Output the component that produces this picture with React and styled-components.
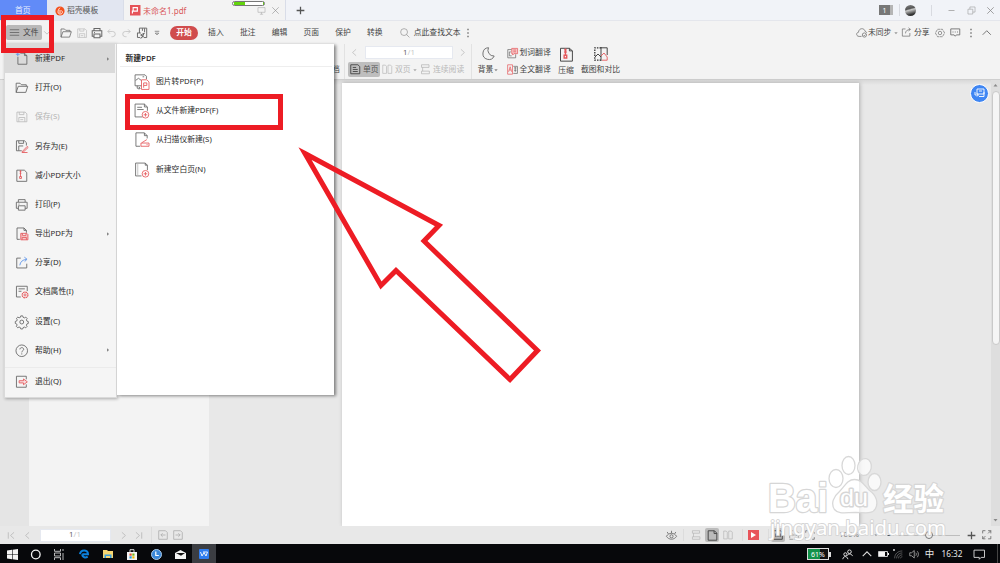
import React from "react";
import styled, { createGlobalStyle } from "styled-components";

const Global = createGlobalStyle`
  html, body { margin: 0; padding: 0; overflow: hidden; background: #e8e8e8; }
  * { box-sizing: border-box; }
`;

const Screen = styled.div`
  position: relative;
  width: 1000px;
  height: 563px;
  overflow: hidden;
  display: flex;
  flex-direction: column;
  font-family: "Noto Sans", "Noto Sans CJK SC", sans-serif;
  font-size: 7.8px;
  line-height: 1;
  color: #444;
  white-space: nowrap;
  background: #e8e8e8;
`;

const Svg = styled.svg`
  display: block;
  flex: none;
  overflow: visible;
  fill: none;
  stroke: ${(p) => p.$c || "#666"};
  stroke-width: ${(p) => p.$sw || 0.9};
`;

const R = "#e5595c";
const B = "#5b93e8";

/* Every glyph is drawn on a 14 x 14 grid. */
const glyphs = {
  folder: <path d="M1.2 11.8V2.3h4l1.5 1.6h5v1.6M1.2 11.8 3.4 5.5h9.8l-2 6.3z" />,
  save: <path d="M2 2.2h8.5L12.3 4v8.2H2zM4.4 2.2v2.6h4.8V2.2M4 12.2V7.8h6.2v4.4M5.5 10h3" />,
  saveAs: <><path d="M7 12.2H1.5V1.8h8.3l2 2v3M3.9 1.8v2.7h5V1.8M3.9 12V7.2h4.6" /><path stroke={R} d="m7.8 12.7 4.8-5 1.1 1-4.7 4.5-1.5.2zM7 14h6" /></>,
  shrink: <><path d="M1.9 1.2h7.8l2.5 2.4v9.2H1.9z" /><path stroke={R} d="M5.7 1.3v7M4.8 7.8h1.9v2H4.8zM4.8 2.5h1.8M4.8 4.4h1.8" /></>,
  compress: <><path stroke="#444" d="M1.4 1.2h8.3l2.800 2.400v9.600H1.400zM9.700 1.200v2.400h2.800" /><path stroke={R} strokeWidth="1.300" d="M6 1.300v7M4.800 7.600h2.400v2.600H4.800zM4.800 2.700h2.400M4.800 4.700h2.400" /></>,
  print: <path d="M3.5 4.2V1.7h7v2.5M3.5 10.7H1.4V4.4h11.2v6.3h-2.1M3.5 8.1h7v4.5h-7zM3.6 6.3h1" />,
  exportAs: <><path d="M5 12.8H2.1V1h7.2l2.5 2.5V6M9.3 1v2.5h2.5" /><path stroke={R} fill="#f6c9ca" d="M6 6.6h6.2l1.2 1.2v5.500H6zM7.700 6.600v2.100h3.700V6.600M7.400 13.300v-2.500h4.400v2.500" /></>,
  shareBlue: <><path d="M6 2.2H1.8v10.2h10.4V8" /><path stroke={B} d="M5 9.700c.5-3.700 2.700-5.800 7-6.200M9.700 1.200l2.800 2.200-2.500 2.400" /></>,
  share: <path d="M6 2.6H1.8v9.6h10V8M6 8.5c0-3 2-5 6.5-5.3M10 1l2.5 2.2L10 5.3" />,
  props: <><path d="M6 12.4H1.5V1.3h11.2v5M3.7 4h6.5M3.7 6.5h3" /><circle cx="10.4" cy="10.3" r="3" stroke={R} strokeDasharray="1.8 .55" strokeWidth="1.2" /><circle cx="10.4" cy="10.3" r="1.1" stroke={R} /></>,
  gear: <><path d="M6 .9h2l.4 1.5 1.4.6 1.4-.8 1.4 1.4-.8 1.4.6 1.4 1.400.4v2l-1.400.4-.6 1.400.7 1.300-1.400 1.400-1.400-.8-1.300.6-.4 1.400H6l-.5-1.500-1.300-.6-1.400.8-1.400-1.400.8-1.400L1.600 9.200.3 8.700v-2L1.700 6.300l.6-1.400-.8-1.400L2.900 2.200l1.400.7 1.300-.5z" /><circle cx="7" cy="7.300" r="2" /></>,
  gearHex: <><path d="M3.600 1.800h6.800l3.100 5.200-3.100 5.200H3.600L.5 7z" strokeDasharray="4 .7" /><circle cx="7" cy="7" r="2.400" /></>,
  help: <><circle cx="7" cy="7" r="6" /><path d="M5.100 5.600c0-2.500 3.900-2.400 3.900 0 0 1.400-2 1.300-2 3.100M7 9.700v1.200" /></>,
  exit: <><path d="M11.700 4.500V1.300H1.500v11.400h10.200V9.700" /><path stroke={R} fill="#f8dcdd" d="M4.300 5.900h4.500V4.100l4 3-4 3V8.200H4.300z" /></>,
  newDoc: <><path d="M5.500 1.200h4.300l2.500 2.500v9H3V5M9.800 1.200v2.500h2.500" /><path stroke={B} d="M2.900.3v4M.9 2.300h4" /></>,
  picPdf: <><path d="M7 11H1V.8h9.300l1.300 1.300v2.600M1.500 6l2.700-2 2.600 2M8 2.600h1.500" /><path d="M3 11v2.300h2.600M4.600 12l1.200 1.300L4.600 14.500" /><path stroke={R} d="M7 5.400h5l2 2v7H7zM9 12.800V8.300h3v2.400H9.200" /></>,
  filePdf: <><path d="M8 13H1V1h8.700L12.500 3.700v3.600M9.700 1v2.700h2.800M3 4h4.500M3 6.100h6" /><circle cx="10.700" cy="11" r="3.100" stroke={R} /><path stroke={R} d="M9 11h3.400M10.700 9.300v3.400" /></>,
  scan: <><path d="M5.800 13.300H1.800V.8h7.900l2.600 2.600V6M9.700.8v2.600h2.600" /><path stroke={R} d="M7.300 10 12 7.100M6.500 10.300h7.500v3H6.500zM11.700 11.800h1" /></>,
  blank: <><path d="M7 13H1.500V1h9l2 2v4.500M10.500 1v2h2" /><path stroke="#bbb" d="M3.500 1.500v11" /><circle cx="10.700" cy="11" r="3.100" stroke={R} /><path stroke={R} d="M9 11h3.400M10.700 9.300v3.400" /></>,
  undo: <path d="M5 3 2.300 5.700 5 8.400M2.300 5.700H8.500a3.300 3.300 0 0 1 0 6.600H7" />,
  redo: <path d="m9 3 2.700 2.700L9 8.400M11.700 5.700H5.500a3.300 3.300 0 0 0 0 6.600H7" />,
  preview: <path d="M4 7V1.300h8.500v11H9M1.700 6.700v5.500h3M1.700 7h4M7.500 1.500v3M10 1.500V6M6.500 13l3.200-6M9.700 7.200 5.400 9.400l3.800 1.700M5.500 13.500l1-2" />,
  hamburger: <path d="M1 3.500h12M1 7h12M1 10.500h12" />,
  down: <path d="m2 4 5 5 5-5" />,
  up: <path d="m1 10 6-6 6 6" />,
  dropdown: <path d="M3 4h8M4 7.200h6L7 10.300z" />,
  left: <path d="M9.500 2 4 7l5.500 5" />,
  right: <path d="m4.500 2 5.500 5-5.500 5" />,
  first: <path d="M2 2v10M11 2 5.500 7l5.500 5" />,
  last: <path d="M12 2v10M3 2l5.500 5L3 12" />,
  caret: <path d="M1 4h12L7 11z" fill="currentColor" stroke="none" />,
  caretR: <path d="m4 1 6.500 6L4 13z" fill="currentColor" stroke="none" />,
  search: <><circle cx="5.700" cy="5.700" r="4.800" /><path d="m9.200 9.200 4 4" /></>,
  dots: <path d="M7 1.200v1.800M7 6.100v1.800M7 11v1.800" strokeWidth="1.800" />,
  cloud: <><path d="M7 12H4C0 12-.2 7 3.200 6.700 3.600.7 11 1 11.500 5.500c1.300.3 2 1 2 2" /><circle cx="10.700" cy="10.200" r="2.700" /><path d="m9.500 10.200 1 1 1.500-1.500" /></>,
  comment: <path d="M1 2.500h12v8H8.500L7 12.300l-1.500-1.800H1zM4 6v1.300M7 6v1.300M10 6v1.300" />,
  monitor: <path d="M1.500 2.500h11v7.300h-11zM7 9.800v3M4.500 12.800h5" />,
  close: <path d="m2 2 10 10M12 2 2 12" />,
  minus: <path d="M1 7h12" />,
  plus: <path d="M7 1v12M1 7h12" />,
  restore: <path d="M1.500 5h7.500v7.500H1.500zM4.500 5V1.500H12.500V9.500H9" />,
  onePage: <path d="M1 1h9.500l2.500 2.400V13H1zM3.700 4.600h4.500M3.700 7.300h6.600M3.700 10h6.600" />,
  twoPage: <path d="M1 1.500h3.500L6 3v9.500H1zM8 1.500h3.500L13 3v9.500H8z" />,
  scroll: <path d="M2 1h10v3.500H2zM3.500 4.500v5M2 9.500h10.500V13H2z" />,
  solidPage: <path d="M1.500 1h8l3 3v9h-11zM9 1v3.500h3.500" />,
  moon: <path d="M7.500.7A5.900 5.900 0 1 0 13.200 9 5.800 5.800 0 0 1 7.500.7z" />,
  wordTrans: <><path d="M6 2H1v10.500h10V8M3 5v5M3 5h2M3 10h3" /><path stroke={R} fill="#f5c4c5" d="M6 .5h7.500v6.700H9L7.200 9V7.200H6zM8 2.600h3.500M8 4.800h3.500" /></>,
  fullTrans: <><path stroke={R} d="M7 1H.8v12H7zM2 10l2-6.500L6 10M2.800 7.600h2.500" /><path d="M8 3h5.300v9H8M9 5h3M9 8h3M10.500 4v6" /></>,
  crop: <><path stroke="#333" strokeWidth="1.300" strokeDasharray="1.500 1.100" d="M7 .8H.8v12.400H7" /><path stroke="#333" d="M7 0v14M7 .8h6.200V8M1 10l3-3 3 3" /><path stroke={R} d="m7 9 3-3 3.200 4v3.200H8" /></>,
  pageL: <path d="M1 1h9.500L13 3.500V13H1zM10.500 7H4M6.500 4.500 4 7l2.500 2.500" />,
  pageR: <path d="M1 1h9.500L13 3.500V13H1zM3.500 7H10M7.500 4.500 10 7 7.500 9.500" />,
  eye: <><path d="M.5 8c3.200-5 9.800-5 13 0-3.200 5-9.800 5-13 0zM7 4V1M3 5 1.500 2.500M11 5l1.500-2.500" /><circle cx="7" cy="8" r="2" /></>,
  fitOne: <path d="M1 1h9.500L13 3.500V13H1zM4 5v5M10 5v5M7 5v1.200M7 8.500v1.200" />,
  fitWidth: <path d="M1 1h9.500L13 3.500V13H1zM3 7h8M5 5 3 7l2 2M9 5l2 2-2 2" strokeDasharray="5 1" />,
  fitPage: <path d="M1 4V1h3M10 1l3 2.500V5M13 10v3h-3M4 13H1v-3" />,
  expand: <path d="M1 5V1h4M9 1h4v4M13 9v4H9M5 13H1V9M9 5l4-4M5 9l-4 4" />,
  people: <><circle cx="9.500" cy="3.500" r="2.300" /><circle cx="4.300" cy="6.800" r="2" /><path d="M6.500 8.500C8 5.500 12 5.700 13.500 9M1 13c.8-4.500 5.500-4.500 6.500 0" /></>,
  wifi: <><path d="M1 13C1 6 6 1.500 13 1.500M4 13c0-5 4-8.500 9-8.500M7 13c0-3.500 3-5.500 6-5.500M10 13c0-1.500 1.500-2.500 3-2.500" /><circle cx="0" cy="0" r="1.500" fill="#ddd" stroke="none" /></>,
  volume: <path d="M1 5h2.500L7 2v10L3.500 9H1zM9 5c1 1 1 3 0 4M11 3c2 2 2 6 0 8" />,
  notify: <path d="M0 1.500h14v9.700H9.500L7 13.700v-2.500H0z" />,
};

const Icon = ({ n, s = 12, c, sw }) => (
  <Svg viewBox="0 0 14 14" width={s} height={s} $c={c} $sw={sw} color={c || "#666"}>{glyphs[n]}</Svg>
);

/* Fixed-width centred cell of a bar */
const Slot = styled.div`
  flex: 0 0 ${(p) => p.$w}px;
  height: 100%;
  display: flex;
  align-items: center;
  justify-content: ${(p) => (p.$start ? "flex-start" : "center")};
  color: ${(p) => p.$c || "inherit"};
  font-size: ${(p) => (p.$fs ? `${p.$fs}px` : "inherit")};
`;
const Spacer = styled.div`flex: 1;`;
const Divider = styled.i`
  flex: 0 0 1px;
  height: ${(p) => p.$h || 12}px;
  background: ${(p) => p.$c || "#dcdcdc"};
`;

/* ---------- title bar ---------- */
const TitleBar = styled.header`
  flex: 0 0 20px;
  display: flex;
  align-items: center;
  background: #f1f3f8;
  border-bottom: 1px solid #e4e6ec;
`;
const Tab = styled.div`
  flex: 0 0 ${(p) => p.$w}px;
  height: 20px;
  display: flex;
  align-items: center;
  color: #555;
  padding-left: ${(p) => p.$pl}px;
  padding-top: 1px;
`;
const HomeTab = styled(Tab)`background: #618bf8; color: #e9efff;`;
const StoreTab = styled(Tab)`background: #e2e6f1; gap: 2px;`;
const FileTab = styled(Tab)`
  background: #f3f3f3;
  color: #d9595b;
  font-size: 8px;
  border-left: 1px solid #d9dde8;
  border-right: 1px solid #d9dde8;
  gap: 2.5px;
`;
const TabTools = styled.div`
  margin-left: auto;
  display: flex;
  align-items: center;
  gap: 5px;
  padding-right: 5px;
`;
const Count = styled.div`
  width: 14px;
  height: 10px;
  background: #777;
  border-right: 3px solid #b5b5b5;
  color: #fff;
  font-size: 7px;
  display: grid;
  place-items: center;
`;
const Avatar = styled.div`
  width: 11px;
  height: 11px;
  border-radius: 50%;
  background: linear-gradient(165deg, #777 10%, #555 35%, #c9c9c9 45%, #888 60%, #333 80%);
`;
const ChargePill = styled.div`
  position: absolute;
  left: 232px;
  top: 0.5px;
  width: 33px;
  height: 5.5px;
  border: 1.3px solid #777;
  border-radius: 3px;
  background: linear-gradient(90deg, #62d40c 0 11px, #fff 11px);
  background-origin: content-box;
  padding: 0 1px;
`;

/* ---------- menu row ---------- */
const MenuRow = styled.nav`
  flex: 0 0 23px;
  display: flex;
  align-items: center;
  background: #f3f3f3;
  padding-left: 6px;
`;
const FileButton = styled.div`
  flex: 0 0 36px;
  height: 15px;
  border-radius: 2px;
  background: #b9b9b9;
  display: flex;
  align-items: center;
  gap: 3px;
  padding-left: 3px;
`;
const StartPill = styled.div`
  flex: 0 0 28px;
  height: 14px;
  margin: 0 2px 0 5px;
  border-radius: 7px;
  background: #d04c4d;
  color: #fff;
  font-weight: 700;
  display: grid;
  place-items: center;
`;

/* ---------- ribbon ---------- */
const Ribbon = styled.section`
  flex: 0 0 36px;
  display: flex;
  background: #f3f3f3;
  border-bottom: 1px solid #cfcfcf;
  padding-left: 334px;
`;
const ClippedLabel = styled.div`
  width: 10px;
  padding-top: 22px;
  margin-left: -2px;
  margin-right: 2px;
`;
const PageTools = styled.div`
  width: 128px;
  border-left: 1px solid #e2e2e2;
  border-right: 1px solid #e2e2e2;
  padding: 2px 3px 0;
  color: #b5b5b5;
`;
const Pager = styled.div`
  display: flex;
  height: 13px;
  align-items: center;
`;
const PageInput = styled.div`
  flex: 0 0 ${(p) => p.$w}px;
  height: 13px;
  background: #fff;
  border: 1px solid #e6e9f0;
  display: flex;
  align-items: center;
  justify-content: center;
  color: #c9c9c9;
  b { font-weight: 400; color: #666; }
`;
const ViewRow = styled.div`
  display: flex;
  align-items: center;
  height: 15px;
  margin-top: 3px;
`;
const ViewButton = styled.div`
  flex: 0 0 ${(p) => p.$w}px;
  height: 15px;
  border-radius: 2px;
  display: flex;
  align-items: center;
  gap: 2.5px;
  padding-left: 2px;
  background: ${(p) => (p.$on ? "#bebebe" : "transparent")};
  color: ${(p) => (p.$on ? "#555" : "#b8b8b8")};
`;
const Tool = styled.div`
  width: ${(p) => p.$w}px;
  display: flex;
  flex-direction: column;
  align-items: center;
  padding-top: ${(p) => p.$pt || 3}px;
  gap: 5px;
  div { display: flex; align-items: center; gap: 1px; }
`;
const TransTools = styled.div`
  width: 50px;
  display: flex;
  flex-direction: column;
  padding: 2.5px 0 0 3px;
  gap: 3.5px;
  div { display: flex; align-items: center; gap: 1.5px; height: 13px; }
`;

/* ---------- workspace ---------- */
const Workspace = styled.main`
  flex: 0 0 446px;
  display: flex;
  background: linear-gradient(#d8d8d8, #e8e8e8 5px);
`;
const SideRail = styled.div`width: 29px; background: #e5e5e5;`;
const Thumbs = styled.div`width: 180px; background: #f3f3f3;`;
const Canvas = styled.div`
  flex: 1;
  padding: 2.500px 0 0 133px;
`;
const Paper = styled.div`
  width: 517px;
  height: 443.500px;
  background: #fff;
  box-shadow: 1px 0 4px rgba(0, 0, 0, 0.25);
`;
const ScrollBar = styled.div`
  width: 9px;
  background: #dedede;
  display: flex;
  flex-direction: column;
  align-items: center;
  justify-content: space-between;
  padding: 2px 0 3px;
`;
const Thumb = styled.div`
  width: 8px;
  height: 254px;
  margin: 3px 0 auto;
  border-radius: 4px;
  background: #f5f5f5;
  border: 1px solid #c9c9c9;
`;
const FloatButton = styled.div`
  position: absolute;
  left: 969.5px;
  top: 83.5px;
  width: 19px;
  height: 19px;
  border-radius: 50%;
  border: 1px solid #fff;
  background: #3f86f3;
  display: grid;
  place-items: center;
`;

/* ---------- menus ---------- */
const FileMenu = styled.aside`
  position: absolute;
  left: 4px;
  top: 43px;
  width: 113px;
  height: 354.500px;
  background: #f5f5f5;
  border: 1px solid #dadada;
  box-shadow: 1px 1px 3px rgba(0, 0, 0, 0.3);
  color: #2b2b2b;
  font-size: 7.800px;
`;
const MenuItem = styled.div`
  height: 29.200px;
  display: flex;
  align-items: center;
  padding-left: 10px;
  color: ${(p) => (p.$off ? "#b3b3b3" : "inherit")};
  background: ${(p) => (p.$on ? "#dadada" : "transparent")};
  margin-right: ${(p) => (p.$on ? 1 : 0)}px;
  margin-top: ${(p) => (p.$gap ? 1.500 : 0)}px;
  border-top: ${(p) => (p.$gap ? "1px solid #ebebeb" : "0")};
  span { margin-left: 6.500px; padding-top: 0.500px; }
  span + svg { margin-left: auto; margin-right: ${(p) => (p.$on ? 5 : 6)}px; }
`;
const SubMenu = styled.aside`
  position: absolute;
  left: 117px;
  top: 44px;
  width: 216.500px;
  height: 351px;
  background: #fff;
  box-shadow: 2px 1px 3px rgba(0, 0, 0, 0.45);
  color: #2b2b2b;
  font-size: 7.800px;
`;
const SubTitle = styled.h2`
  margin: 0 2px 0 3px;
  padding: 10.500px 0 0 5.500px;
  height: 23px;
  font-size: 7.800px;
  line-height: 1;
  font-weight: 600;
  border-bottom: 1px solid #eee;
`;
const SubItem = styled.div`
  height: 29.200px;
  display: flex;
  align-items: center;
  gap: 7px;
  padding-left: 17px;
  span { padding-top: 0.500px; }
`;

/* ---------- status bar ---------- */
const StatusBar = styled.footer`
  flex: 0 0 18px;
  display: flex;
  align-items: center;
  background: #e8e8e8;
  padding-left: 4px;
  color: #777;
`;
const Toggle = styled.div`
  width: 14px;
  height: 14px;
  border-radius: 2px;
  background: #bbb;
  display: grid;
  place-items: center;
`;
const Play = styled.div`
  width: 10.500px;
  height: 10.500px;
  background: #e8545a;
  display: grid;
  place-items: center;
`;
const Track = styled.div`
  flex: 0 0 62px;
  height: 1px;
  background: #bdbdbd;
  display: flex;
  align-items: center;
  padding-left: 27px;
`;
const Knob = styled.i`
  flex: none;
  width: 8px;
  height: 8px;
  border: 1px solid #777;
  border-radius: 50%;
  background: #f0f0f0;
`;

/* ---------- taskbar ---------- */
const Taskbar = styled.footer`
  flex: 0 0 20px;
  display: flex;
  align-items: center;
  background: #07080b;
  color: #e8e8e8;
`;
const App24 = styled.div`
  width: 24px;
  height: 20px;
  display: grid;
  place-items: center;
  background: ${(p) => (p.$on ? "#3b3d42" : "transparent")};
  border-bottom: ${(p) => (p.$run ? "1.500px solid #76b9ed" : "0")};
`;
const Charge = styled.div`
  width: 22px;
  height: 12px;
  border: 1px solid #ddd;
  background: linear-gradient(90deg, #13924a 61%, #111 61%);
  color: #fff;
  font-size: 7px;
  display: grid;
  place-items: center;
`;

/* ---------- overlays ---------- */
const Mark = styled.div`
  position: absolute;
  left: ${(p) => p.$x}px;
  top: ${(p) => p.$y}px;
  width: ${(p) => p.$w}px;
  height: ${(p) => p.$h}px;
  border: 5px solid #ed1c24;
`;
const Overlay = styled.svg`
  position: absolute;
  left: 0;
  top: 0;
  pointer-events: none;
`;

const items = [
  ["newDoc", "新建PDF", { $on: true }, true],
  ["folder", "打开(O)"],
  ["save", "保存(S)", { $off: true }],
  ["saveAs", "另存为(E)"],
  ["shrink", "减小PDF大小"],
  ["print", "打印(P)"],
  ["exportAs", "导出PDF为", {}, true],
  ["shareBlue", "分享(D)"],
  ["props", "文档属性(I)"],
  ["gear", "设置(C)"],
  ["help", "帮助(H)", {}, true],
  ["exit", "退出(Q)", { $gap: true }],
];
const subItems = [
  ["picPdf", "图片转PDF(P)"],
  ["filePdf", "从文件新建PDF(F)"],
  ["scan", "从扫描仪新建(S)"],
  ["blank", "新建空白页(N)"],
];

const Watermark = () => (
  <Overlay width="1000" height="563" viewBox="0 0 1000 563" fontFamily="'Liberation Sans','Noto Sans CJK SC',sans-serif">
    <g fill="#fff" fillOpacity="0.72" stroke="#d8d8d8" strokeWidth="1.300">
      <ellipse cx="836" cy="478.500" rx="7" ry="9" />
      <ellipse cx="848.500" cy="465.500" rx="6.500" ry="9" />
      <ellipse cx="864.500" cy="467" rx="6.800" ry="8.500" transform="rotate(12 864.500 467)" />
      <ellipse cx="874.500" cy="482" rx="6.500" ry="8.500" />
      <path d="M854.500 479.500c7 0 10 6 15 11 7 5 9 12 6 18-3 6-10 4-20 4s-17 2-21-3c-4-6-1-13 5-18 5-5 8-12 15-12z" />
    </g>
    <g fill="#fff" stroke="#d6d6d6" paintOrder="stroke" strokeLinejoin="round">
      <text x="768" y="511.500" fontSize="40" fontWeight="700" strokeWidth="2.500" textLength="60" lengthAdjust="spacingAndGlyphs">Bai</text>
      <text x="840" y="506" fontSize="24" strokeWidth="3" textLength="28" lengthAdjust="spacingAndGlyphs">du</text>
      <text x="883" y="510" fontSize="31" fontWeight="700" strokeWidth="2.500" textLength="61" lengthAdjust="spacingAndGlyphs">经验</text>
      <text x="770" y="534.500" fontSize="19" fontFamily="'Noto Sans',sans-serif" strokeWidth="1.800" textLength="176" lengthAdjust="spacingAndGlyphs">jingyan.baidu.com</text>
    </g>
  </Overlay>
);

export default function App() {
  return (
    <Screen>
      <Global />
      <TitleBar>
        <HomeTab $w={47} $pl={15}>首页</HomeTab>
        <StoreTab $w={76} $pl={8}>
          <Svg width="10" height="10" viewBox="0 0 10 10"><circle cx="5" cy="5" r="4.600" fill="#f4511e" stroke="none" /><path d="M5 1.800C2.500 4 2.300 8 5 8s3-2 1.500-3.500M5 4v3" stroke="#fff" /></Svg>
          稻壳模板
        </StoreTab>
        <FileTab $w={163} $pl={6}>
          <Svg width="10.500" height="10.500" viewBox="0 0 10 10"><path d="M0 0h10v10H0z" fill="#e65358" stroke="none" /><path d="M2.300 8V5.800H7V2.500H3v3.300" stroke="#fff" strokeWidth="1.100" /></Svg>
          未命名1.pdf
          <TabTools><Icon n="monitor" s={9} c="#aaa" /><Icon n="close" s={9} c="#888" /></TabTools>
        </FileTab>
        <Slot $w={28}><Icon n="plus" s={9} c="#555" sw={2} /></Slot>
        <Spacer />
        <Count>1</Count>
        <Slot $w={6} />
        <Divider $c="#d8dae0" />
        <Slot $w={21}><Avatar /></Slot>
        <Slot $w={10} />
        <Divider $c="#d8dae0" $h={11} />
        <Slot $w={9} />
        <Slot $w={20}><Icon n="minus" s={7} c="#999" sw={1.5} /></Slot>
        <Slot $w={20}><Icon n="restore" s={9} c="#999" /></Slot>
        <Slot $w={19}><Icon n="close" s={9} c="#888" sw={1.200} /></Slot>
      </TitleBar>

      <MenuRow>
        <FileButton><Icon n="hamburger" s={11} c="#555" />文件</FileButton>
        <Slot $w={9}><Icon n="down" s={8} c="#999" /></Slot>
        <Slot $w={7} />
        <Slot $w={16}><Icon n="folder" s={12} /></Slot>
        <Slot $w={15}><Icon n="save" s={12} c="#c0c0c0" /></Slot>
        <Slot $w={15}><Icon n="print" s={12} sw={1.2} /></Slot>
        <Slot $w={15}><Icon n="undo" s={11} c="#bbb" /></Slot>
        <Slot $w={15}><Icon n="redo" s={11} c="#bbb" /></Slot>
        <Slot $w={15}><Icon n="preview" s={12} sw={1.1} /></Slot>
        <Slot $w={16}><Icon n="dropdown" s={8} sw={1.2} /></Slot>
        <StartPill>开始</StartPill>
        {["插入", "批注", "编辑", "页面", "保护", "转换"].map((t) => (
          <Slot key={t} $w={31.8}>{t}</Slot>
        ))}
        <Slot $w={8} />
        <Slot $w={12}><Icon n="search" s={10} c="#888" /></Slot>
        <Slot $w={3} />
        <Slot $w={49} $start>点此查找文本</Slot>
        <Slot $w={9}><Icon n="dots" s={10} /></Slot>
        <Spacer />
        <Slot $w={13}><Icon n="cloud" s={11} /></Slot>
        <Slot $w={24} $start>未同步</Slot>
        <Slot $w={7}><Icon n="caret" s={4} c="#999" /></Slot>
        <Slot $w={15}><Icon n="share" s={10.5} /></Slot>
        <Slot $w={18} $start>分享</Slot>
        <Slot $w={15}><Icon n="gearHex" s={10} /></Slot>
        <Slot $w={16}><Icon n="comment" s={10.5} sw={1.1} /></Slot>
        <Slot $w={16}><Icon n="dots" s={10} /></Slot>
        <Slot $w={15}><Icon n="up" s={9.5} sw={1.3} /></Slot>
        <Slot $w={6} />
      </MenuRow>

      <Ribbon>
        <ClippedLabel>档</ClippedLabel>
        <PageTools>
          <Pager>
            <Slot $w={13}><Icon n="left" s={9} c="#aaa" /></Slot>
            <Slot $w={4} />
            <PageInput $w={88}><b>1</b>/1</PageInput>
            <Slot $w={19}><Icon n="right" s={9} c="#aaa" /></Slot>
          </Pager>
          <ViewRow>
            <ViewButton $on $w={32}><Icon n="onePage" s={10.5} c="#444" sw={1.2} />单页</ViewButton>
            <ViewButton $w={38}><Icon n="twoPage" s={10.5} c="#b8b8b8" />双页<Icon n="caret" s={4} c="#aaa" /></ViewButton>
            <ViewButton $w={50}><Icon n="scroll" s={10.5} c="#b0b0b0" />连续阅读</ViewButton>
          </ViewRow>
        </PageTools>
        <Tool $w={32}><Icon n="moon" s={14} c="#555" sw={0.8} /><div>背景 <Icon n="caret" s={4} c="#888" /></div></Tool>
        <TransTools>
          <div><Icon n="wordTrans" s={11} />划词翻译</div>
          <div><Icon n="fullTrans" s={11} />全文翻译</div>
        </TransTools>
        <Tool $w={24} $pt={2.5}><Icon n="compress" s={15} /><div>压缩</div></Tool>
        <Tool $w={45}><Icon n="crop" s={14} /><div>截图和对比</div></Tool>
      </Ribbon>

      <Workspace>
        <SideRail />
        <Thumbs />
        <Canvas><Paper /></Canvas>
        <ScrollBar>
          <Svg width="5" height="6" viewBox="0 0 5 6"><path d="M.5 4.500h4l-2-2.500z" fill="#888" stroke="none" /></Svg>
          <Thumb />
          <Svg width="5" height="6" viewBox="0 0 5 6"><path d="M.5 2h4l-2 2.500z" fill="#888" stroke="none" /></Svg>
        </ScrollBar>
      </Workspace>

      <StatusBar>
        <Slot $w={15}><Icon n="first" s={9} c="#b5b5b5" sw={1.2} /></Slot>
        <Slot $w={16}><Icon n="left" s={9} c="#b5b5b5" sw={1.2} /></Slot>
        <Slot $w={4.5} />
        <PageInput $w={71}><b>1</b>/1</PageInput>
        <Slot $w={5} />
        <Slot $w={15}><Icon n="right" s={9} c="#b5b5b5" sw={1.2} /></Slot>
        <Slot $w={15}><Icon n="last" s={9} c="#b5b5b5" sw={1.2} /></Slot>
        <Slot $w={5} />
        <Divider $h={16} />
        <Slot $w={4} />
        <Slot $w={15}><Icon n="pageL" s={10} c="#b0b0b0" sw={1.2} /></Slot>
        <Slot $w={15}><Icon n="pageR" s={10} c="#b0b0b0" sw={1.2} /></Slot>
        <Spacer />
        <Slot $w={20}><Icon n="eye" s={11} c="#555" /></Slot>
        <Slot $w={2} />
        <Divider />
        <Slot $w={4} />
        <Slot $w={16}><Icon n="scroll" s={10} c="#b0b0b0" /></Slot>
        <Slot $w={16}><Toggle><Icon n="solidPage" s={11} c="#444" sw={1.2} /></Toggle></Slot>
        <Slot $w={15}><Icon n="twoPage" s={10} c="#b0b0b0" /></Slot>
        <Slot $w={7} />
        <Divider />
        <Slot $w={21}><Play><Svg width="5" height="6" viewBox="0 0 5 6"><path d="M0 0v6l5-3z" fill="#fff" stroke="none" /></Svg></Play></Slot>
        <Slot $w={4} />
        <Divider />
        <Slot $w={1} />
        <Slot $w={16}><Toggle><Icon n="fitOne" s={10} c="#444" sw={1.3} /></Toggle></Slot>
        <Slot $w={16}><Icon n="fitWidth" s={10} c="#777" /></Slot>
        <Slot $w={16}><Icon n="fitPage" s={10} c="#555" /></Slot>
        <Slot $w={20} />
        <Slot $w={22}>100%</Slot>
        <Slot $w={9} />
        <Slot $w={14}><Icon n="caret" s={4} c="#999" /></Slot>
        <Slot $w={2} />
        <Slot $w={10}><Icon n="minus" s={7} c="#555" sw={2} /></Slot>
        <Slot $w={3} />
        <Track><Knob /></Track>
        <Slot $w={3} />
        <Slot $w={16}><Icon n="plus" s={9} c="#555" sw={2} /></Slot>
        <Slot $w={15}><Icon n="expand" s={9.5} c="#666" sw={1.2} /></Slot>
        <Slot $w={6} />
      </StatusBar>

      <Taskbar>
        <App24><Svg width="11" height="11" viewBox="0 0 11 11"><path d="M0 1.500 5 .8v4.400H0zM5.600.7 11 0v5.200H5.600zM0 5.800h5v4.400l-5-.7zM5.600 5.800H11V11l-5.400-.7z" fill="#f4f4f4" stroke="none" /></Svg></App24>
        <App24><Svg width="11" height="11" viewBox="0 0 11 11"><circle cx="4.800" cy="5.500" r="4.300" stroke="#f4f4f4" strokeWidth="1.300" /></Svg></App24>
        <App24><Svg width="12" height="11" viewBox="0 0 12 11" $c="#ccc"><path d="M.5 0v2.300h6V0M.5 11V8.700h6V11M.5 4h6v3h-6zM9 0v2M9 4v7" /></Svg></App24>
        <App24><Svg width="10" height="10" viewBox="0 0 10 10"><path d="M1 5.200C1.500.2 9 .1 9 5.200H3.300M3.300 5.300c0 3.400 3.400 3.600 5.400 2.400" stroke="#0c80dc" strokeWidth="2" /></Svg></App24>
        <App24 $run><Svg width="10" height="10" viewBox="0 0 10 10"><path d="M0 1h4l1 1h5v7H0z" fill="#f7d672" stroke="none" /><path d="M1.500 9V5.500h7V9H7V7H3v2z" fill="#3aa0de" stroke="none" /></Svg></App24>
        <App24><Svg width="10" height="11" viewBox="0 0 10 11"><path d="M0 3h10v8H0z" fill="#f4f4f4" stroke="none" /><path d="M3 3V.7h4V3" stroke="#f4f4f4" /><path d="M2.500 4.500h2.200v2.200H2.500z" fill="#e8502c" stroke="none" /><path d="M5.300 4.500h2.200v2.200H5.300z" fill="#74b816" stroke="none" /><path d="M2.500 7.300h2.200v2.200H2.500z" fill="#1c9be4" stroke="none" /><path d="M5.300 7.300h2.200v2.200H5.300z" fill="#f5b800" stroke="none" /></Svg></App24>
        <App24><Svg width="11" height="11" viewBox="0 0 11 11"><circle cx="5.500" cy="5.500" r="5" fill="#3a87d8" stroke="#b9d6f3" /><path d="M4.800 2.500v4h3" stroke="#fff" strokeWidth="1.200" /></Svg></App24>
        <App24><Svg width="11" height="9" viewBox="0 0 11 9"><path d="M0 3 5.500 0 11 3v6H0z" fill="#f4f4f4" stroke="none" /><path d="M1 3h9L6 5.800z" fill="#111" stroke="none" /></Svg></App24>
        <App24 $on $run><Svg width="10" height="10" viewBox="0 0 10 10"><rect width="10" height="10" rx="1" fill="#2f7df0" stroke="none" /><path d="M1.500 3 3 7l2-3.500L7 7l1.500-4H4" stroke="#fff" /></Svg></App24>
        <Spacer />
        <Charge>61%</Charge>
        <Slot $w={2} $start><Svg width="2" height="5"><path d="M0 0h2v5H0z" fill="#ddd" stroke="none" /></Svg></Slot>
        <Slot $w={7} />
        <Slot $w={19}><Icon n="people" s={11} c="#e8e8e8" sw={1.2} /></Slot>
        <Slot $w={20}><Icon n="up" s={10} c="#ddd" sw={1.5} /></Slot>
        <Slot $w={13}><Svg width="11" height="6" viewBox="0 0 11 6"><path d="M.5.5h9v5h-9z" stroke="#ddd" /><path d="M1 1h6v4H1zM10 2h1v2h-1z" fill="#f4f4f4" stroke="none" /></Svg></Slot>
        <Slot $w={17}><Icon n="wifi" s={9} c="#8a8a8a" /></Slot>
        <Slot $w={14}><Icon n="volume" s={10.5} c="#ccc" /></Slot>
        <Slot $w={17} $fs={9.5}>中</Slot>
        <Slot $w={28} $fs={8.2}>16:32</Slot>
        <Slot $w={26}><Icon n="notify" s={10.5} c="#ddd" sw={1.2} /></Slot>
        <Slot $w={5} />
        <Divider $c="#444" $h={20} />
        <Slot $w={2} />
      </Taskbar>

      <FileMenu>
        {items.map(([icon, label, state, more]) => (
          <MenuItem key={label} {...state}>
            <Icon n={icon} s={13.5} c={state?.$off ? "#bcbcbc" : "#666"} />
            <span>{label}</span>
            {more && <Icon n="caretR" s={4} c="#777" />}
          </MenuItem>
        ))}
      </FileMenu>
      <SubMenu>
        <SubTitle>新建PDF</SubTitle>
        {subItems.map(([icon, label]) => (
          <SubItem key={label}><Icon n={icon} s={15} sw={0.8} /><span>{label}</span></SubItem>
        ))}
      </SubMenu>

      <ChargePill />
      <FloatButton>
        <Svg width="11" height="10" viewBox="0 0 11 10" $c="#fff"><path d="M3 1h7v5H3zM1 4v3h3M3 5.500 4.500 7 3 8.500M5 8.500h5V4M5 3h3" /></Svg>
      </FloatButton>
      <Watermark />

      <Mark $x={1} $y={15} $w={53} $h={38} />
      <Mark $x={125} $y={93.5} $w={158} $h={36.500} />
      <Overlay width="1000" height="563" viewBox="0 0 1000 563">
        <path d="M305 153.500 439 225.500 424 241 537.500 350.500 510 379.500 396 270.500 381 285.500Z" fill="none" stroke="#ed1c24" strokeWidth="5" />
      </Overlay>
    </Screen>
  );
}
